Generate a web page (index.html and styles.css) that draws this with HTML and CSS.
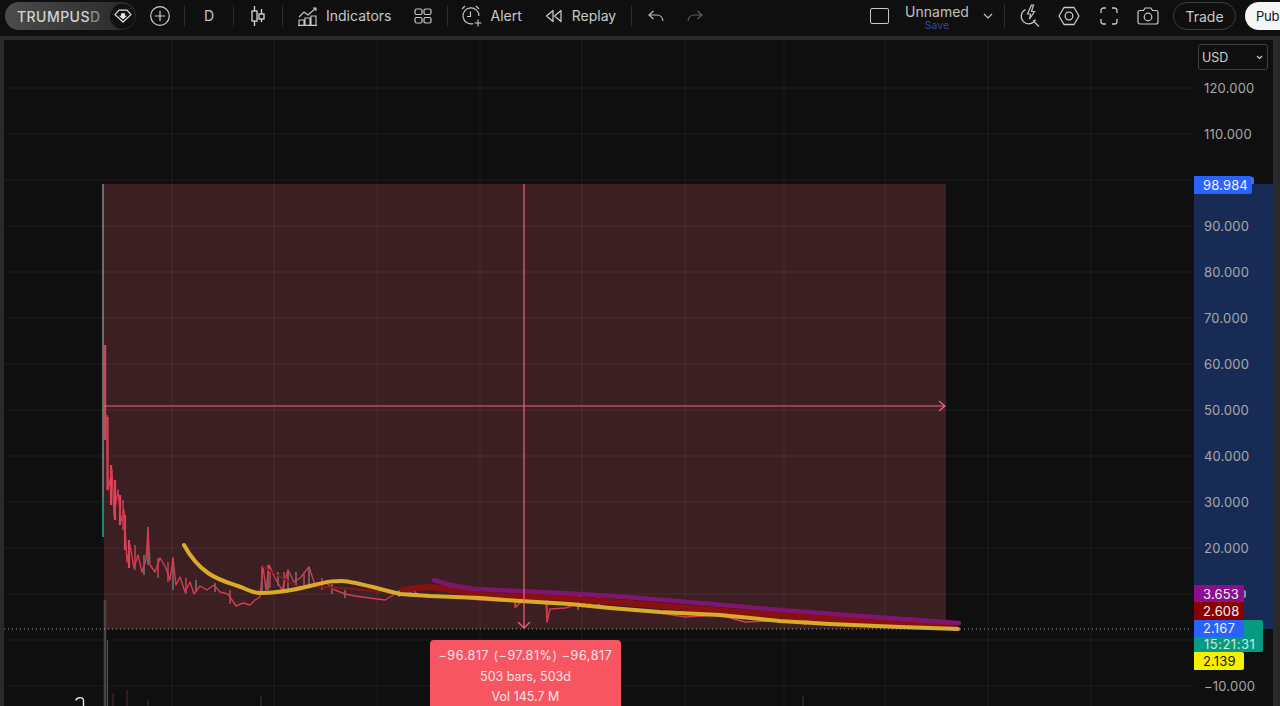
FILE: index.html
```html
<!DOCTYPE html>
<html lang="en">
<head>
<meta charset="utf-8">
<title>TRUMPUSD chart</title>
<link rel="stylesheet" href="styles.css">
</head>
<body>
<header class="toolbar">
  <div class="symbol">
    <span class="symbol-name">TRUMPUS<span class="fade">D</span></span>
    <span class="symbol-badge">
      <svg width="18" height="14" viewBox="0 0 18 14" fill="none" stroke="#e4e4e4" stroke-width="1.2" stroke-linejoin="round"><path d="M5 1.2h8l4 4.400L9 13 1 5.600z"/><path d="M7 4.200h4v2.600h2L9 10.400 5 6.800h2z" fill="#e4e4e4" stroke="none"/></svg>
    </span>
  </div>
  <button class="btn btn-plus">
    <svg width="20" height="20" viewBox="0 0 20 20" fill="none" stroke="#d0d0d0" stroke-width="1.2"><circle cx="10" cy="10" r="9.300"/><path d="M10 5v10M5 10h10"/></svg>
  </button>
  <i class="sep"></i>
  <button class="btn btn-cell">D</button>
  <i class="sep"></i>
  <button class="btn btn-cell">
    <svg width="16" height="20" viewBox="0 0 16 20" fill="none" stroke="#d8d8d8" stroke-width="1.300"><path d="M4.500 0v5M4.500 15v5M11.500 3v5M11.500 13v3"/><rect x="2" y="5" width="5" height="10"/><rect x="9" y="8" width="5" height="5"/></svg>
  </button>
  <i class="sep"></i>
  <button class="btn btn-indicators">
    <svg width="20" height="20" viewBox="0 0 20 20" fill="none" stroke="#c8c8c8" stroke-width="1.100"><path d="M1 11l5-5 4 3 8-7M15 2h3v3"/><path d="M1 19v-5h5v5M7 19v-7h5v7M13 19v-9h5v9M0 19.400h19"/></svg>
    <span>Indicators</span>
  </button>
  <button class="btn btn-layout">
    <svg width="18" height="16" viewBox="0 0 18 16" fill="none" stroke="#c8c8c8" stroke-width="1.200"><rect x="1" y="1" width="7" height="5.500" rx="1.500"/><rect x="10" y="1" width="7" height="5.500" rx="1.500"/><rect x="1" y="9.500" width="7" height="5.500" rx="1.500"/><rect x="10" y="9.500" width="7" height="5.500" rx="1.500"/></svg>
  </button>
  <i class="sep sep-layout"></i>
  <button class="btn btn-alert">
    <svg width="22" height="22" viewBox="0 0 22 22" fill="none" stroke="#c8c8c8" stroke-width="1.100"><path d="M12 18.600A8 8 0 1 1 18 11"/><path d="M9.500 6.500v5H6M1 4l3-3M15 1l3 3M17 14.500v7M13.500 18h7"/></svg>
    <span>Alert</span>
  </button>
  <button class="btn btn-replay">
    <svg width="18" height="14" viewBox="0 0 18 14" fill="none" stroke="#d0d0d0" stroke-width="1.200" stroke-linejoin="round"><path d="M8 1.500 1.500 7 8 12.500zM16 1.500 9.500 7l6.500 5.500z"/></svg>
    <span>Replay</span>
  </button>
  <i class="sep sep-replay"></i>
  <button class="btn btn-undo">
    <svg width="16" height="12" viewBox="0 0 16 12" fill="none" stroke="#b8b8b8" stroke-width="1.200"><path d="M5.500 1 1 5l4.500 4M1 5h8c4 0 5.500 2.500 6 6"/></svg>
  </button>
  <button class="btn btn-redo">
    <svg width="16" height="12" viewBox="0 0 16 12" fill="none" stroke="#5c5c5c" stroke-width="1.200"><path d="M10.500 1 15 5l-4.500 4M15 5H7c-4 0-5.500 2.500-6 6"/></svg>
  </button>

  <div class="toolbar-right">
    <span class="square"></span>
    <div class="layout-name">
      <span class="layout-title">Unnamed</span>
      <span class="layout-save">Save</span>
    </div>
    <button class="btn btn-chevron">
      <svg width="10" height="6" viewBox="0 0 10 6" fill="none" stroke="#c8c8c8" stroke-width="1.200"><path d="M1 1l4 4 4-4"/></svg>
    </button>
    <i class="sep sep-name"></i>
    <button class="btn btn-quick">
      <svg width="21" height="24" viewBox="0 0 21 24" fill="none" stroke="#c8c8c8" stroke-width="1.200"><path d="M6.500 5.500a7.500 7.500 0 1 0 10 10M14 16.500l6 6"/><path d="M12.500 1 8.500 10h3l-1 5 5-7.500h-3l2-6.500z"/></svg>
    </button>
    <button class="btn btn-hex">
      <svg width="22" height="20" viewBox="0 0 22 20" fill="none" stroke="#c8c8c8" stroke-width="1.300" stroke-linejoin="round"><path d="M6 1.500h10l5 8.500-5 8.500H6L1 10z"/><circle cx="11" cy="10" r="3.800"/></svg>
    </button>
    <button class="btn btn-full">
      <svg width="18" height="18" viewBox="0 0 18 18" fill="none" stroke="#c8c8c8" stroke-width="1.300"><path d="M1 6V3.500A2.500 2.500 0 0 1 3.500 1H6M12 1h2.500A2.500 2.500 0 0 1 17 3.500V6M17 12v2.500a2.500 2.500 0 0 1-2.500 2.500H12M6 17H3.500A2.500 2.500 0 0 1 1 14.500V12"/></svg>
    </button>
    <button class="btn btn-camera">
      <svg width="22" height="18" viewBox="0 0 22 18" fill="none" stroke="#c8c8c8" stroke-width="1.200"><path d="M3 3.500h3.500L8 1h6l1.500 2.500H19a2 2 0 0 1 2 2V15a2 2 0 0 1-2 2H3a2 2 0 0 1-2-2V5.500a2 2 0 0 1 2-2z"/><circle cx="11" cy="10" r="3.800"/></svg>
    </button>
    <button class="pill pill-trade">Trade</button>
    <button class="pill pill-publish">Pub</button>
  </div>
</header>

<main class="workspace">
  <div class="chart">
    <svg class="chart-svg" viewBox="4 40 1188 666" preserveAspectRatio="none">
      <rect class="measure" x="104" y="184" width="842" height="445"/>
      <path class="grid" d="M4 88H1192M4 134H1192M4 180H1192M4 226H1192M4 272H1192M4 318H1192M4 364H1192M4 410H1192M4 456H1192M4 502H1192M4 548H1192M4 594H1192M4 640H1192M4 686H1192M172 40V706M274 40V706M377 40V706M480 40V706M582 40V706M685 40V706M784 40V706M885 40V706M988 40V706M1091 40V706"/>
      <g class="soft">
        <path class="vol" d="M105 600V706"/>
        <path class="vol-thin-gray" d="M107.500 640V706"/>
        <path class="vol-thin" d="M113 693V706M127 690V706M148 700V706M261 696V706M803 696V706"/>
        <path class="wick-green" d="M103 184V500"/>
        <path class="wick-teal" d="M103 497V537"/>
        <path class="wick-red" d="M105 345V440"/>
        <path class="body-red" d="M107.500 417V490M111 465V505M115 480V520M120 495V525M125 515V550M129 540V568"/>
        <path class="ticks-green" d="M148 527V565M173 558V590M262 566V592M268 565V590M288 570V590M309 567V585M399 590V597M410 586V597M578 595V610M598 595V607M805 619V625M144 555V575M196 580V592M215 583V592M278 572V586M296 572V586M332 584V594M345 590V598"/>
        <path class="ticks-red" d="M515 597V608M547 600V622M123 500V530M135 545V570M158 558V578M168 562V582M186 578V594M230 590V604M270 566V588M284 572V590M304 574V588M322 578V590"/>
        <polyline class="price" points="107,415 108,490 112,470 114,515 118,490 121,522 124,510 127,562 130,545 134,568 138,555 142,572 146,560 148,530 150,565 155,572 160,558 165,566 170,580 173,558 176,585 180,577 185,592 190,582 194,594 200,586 207,590 214,585 220,592 228,594 236,606 243,603 250,605 255,600 260,597 263,566 266,590 269,565 275,578 282,590 288,570 294,582 300,578 309,567 315,585 325,582 335,590 345,594 355,596 370,598 385,600 395,594 410,588 420,596 450,596 480,600 500,601 515,600 516,607 522,601 546,602 547,622 550,609 565,608 578,604 580,596 586,606 598,598 600,606 640,610 660,613 685,617 720,615 745,622 770,621 800,622 805,620 830,624"/>
      </g>
      <g class="soft">
        <path class="ma-red-thin" d="M262 566 296 586 345 588 380 592"/>
        <path class="ma-red" d="M400 591 415 588 430 587 445 589 480 595 560 598 640 604 700 609 800 617 880 622 958 627"/>
        <path class="ma-purple" d="M434 580 450 585 475 589 520 591 580 594 640 598 700 603 780 610 860 616 959 623"/>
        <path class="ma-yellow" d="M184 545C190 556 198 566 208 573S226 582 238 586 250 593 262 593 290 591 310 586 332 581 342 581 372 587 400 594L430 596 480 598 520 601 570 604 610 608 660 612 720 615 780 621 830 624 900 627 958 629"/>
      </g>
      <path class="last" d="M4 629H1192"/>
      <path class="cross" d="M104 406H945M939 401l6 5-6 5M524 184V628M518 622l6 6 6-6"/>
    </svg>
    <svg class="logo-mark" width="12" height="12" viewBox="0 0 12 12" fill="none" stroke="#e8e8e8" stroke-width="1.400"><path d="M2 4.500C2 1.500 9.500 0 9.500 4.500V12"/></svg>
    <div class="measure-tip">
      <p class="tip-wide">−96.817 (−97.81%) −96,817</p>
      <p>503 bars, 503d</p>
      <p>Vol 145.7 M</p>
    </div>
  </div>
  <aside class="axis">
    <div class="currency"><span>USD</span><svg width="7" height="5" viewBox="0 0 7 5" fill="none" stroke="#d0d0d0" stroke-width="1.200"><path d="M1 1l2.500 2.500L6 1"/></svg></div>
    <div class="scale">
      <span>120.000</span><span>110.000</span><span></span><span>90.000</span><span>80.000</span><span>70.000</span><span>60.000</span><span>50.000</span><span>40.000</span><span>30.000</span><span>20.000</span><span></span><span></span><span>−10.000</span>
    </div>
    <div class="band"></div>
    <span class="tag tag-last">98.984</span>
    <span class="tag tag-purple">3.653</span>
    <span class="tag tag-red">2.608</span>
    <div class="tag-countdown"><span class="tag-price">2.167</span><span class="tag-time">15:21:31</span></div>
    <span class="tag tag-yellow">2.139</span>
  </aside>
</main>
</body>
</html>
```
FILE: styles.css
```css
* { box-sizing: border-box; }
html, body { margin: 0; height: 100%; overflow: hidden; background: #0f0f0f; }
body {
  display: flex;
  flex-direction: column;
  width: 1280px;
  height: 706px;
  font-family: Inter, "Liberation Sans", sans-serif;
  color: #c8c8c8;
}
p { margin: 0; }

.toolbar {
  flex: 0 0 36px;
  display: flex;
  align-items: center;
  padding: 0 0 4px 5px;
  background: #0f0f0f;
  overflow: hidden;
}
.btn {
  display: flex;
  align-items: center;
  justify-content: center;
  padding: 0;
  border: 0;
  background: none;
  color: #c8c8c8;
  font: inherit;
  font-size: 14px;
  line-height: 20px;
}
.sep { flex: 0 0 1px; height: 22px; background: #2b2b2b; }

.symbol {
  flex: 0 0 131px;
  height: 28px;
  display: flex;
  align-items: center;
  justify-content: space-between;
  padding: 0 1px 0 12px;
  border-radius: 14px;
  background: linear-gradient(90deg, #4b4b4b, #333 70%, #262626);
}
.symbol-name { font-size: 14px; font-weight: 500; color: #d2d2d2; letter-spacing: .45px; }
.fade { color: #8a8a8a; }
.symbol-badge {
  width: 25px;
  height: 25px;
  border-radius: 50%;
  background: #111;
  display: flex;
  align-items: center;
  justify-content: center;
}
.btn-plus { width: 48px; }
.btn-cell { width: 48px; }
.btn-indicators { margin-left: 15px; gap: 8px; }
.btn-layout { margin-left: 22px; }
.sep-layout { margin-left: 15px; }
.btn-alert { margin-left: 13px; gap: 8px; }
.btn-replay { margin-left: 23px; gap: 9px; }
.sep-replay { margin-left: 15px; }
.btn-undo { margin-left: 16px; }
.btn-redo { margin-left: 23px; }

.toolbar-right { margin-left: auto; display: flex; align-items: center; }
.square { width: 19px; height: 16px; border: 1.3px solid #c8c8c8; border-radius: 2px; }
.layout-name { width: 64px; margin-left: 16px; display: flex; flex-direction: column; align-items: center; gap: 1px; margin-top: 2px; }
.layout-title { font-size: 14px; line-height: 15px; color: #c0c0c0; }
.layout-save { font-size: 10.500px; line-height: 11px; color: #2a47a8; }
.btn-chevron { margin-left: 14px; }
.sep-name { margin-left: 11px; height: 24px; }
.btn-quick { margin-left: 14px; }
.btn-hex { margin-left: 18px; }
.btn-full { margin-left: 20px; }
.btn-camera { margin-left: 19px; }
.pill {
  height: 28px;
  border-radius: 14px;
  font: inherit;
  font-size: 14px;
  padding: 0;
}
.pill-trade { width: 63px; margin-left: 14px; border: 1px solid #3c3c3c; background: none; color: #c8c8c8; }
.pill-publish {
  width: 35px;
  margin-left: 9px;
  border: 0;
  border-radius: 14px 0 0 14px;
  background: #f6f6f6;
  color: #111;
  font-size: 13px;
  letter-spacing: -.2px;
  text-align: left;
  white-space: nowrap;
  padding-left: 11px;
}

.workspace {
  flex: 1;
  display: flex;
  position: relative;
  border-top: 4px solid #2a2a2a;
  border-left: 4px solid #2a2a2a;
  border-right: 7px solid #2a2a2a;
  min-height: 0;
}
.chart { flex: 1; position: relative; overflow: hidden; }
.chart-svg { display: block; width: 100%; height: 100%; }
.soft { filter: blur(.35px); }
.measure { fill: #3c1f22; }
.grid { stroke: rgba(255,255,255,.055); stroke-width: 1; fill: none; }
.vol { stroke: #4c4345; stroke-width: 2.500; fill: none; }
.vol-thin-gray { stroke: #555; stroke-width: 1; fill: none; }
.vol-thin { stroke: #4b3034; stroke-width: 1; fill: none; }
.wick-green { stroke: #84938c; stroke-width: 1.500; fill: none; }
.wick-teal { stroke: #168a72; stroke-width: 2; fill: none; }
.wick-red { stroke: #c24a5c; stroke-width: 2.500; fill: none; }
.body-red { stroke: #d8485c; stroke-width: 2.200; fill: none; }
.ticks-green { stroke: #7c9088; stroke-width: 1.200; fill: none; }
.ticks-red { stroke: #d84a5c; stroke-width: 1.300; fill: none; }
.price { stroke: #d83a50; stroke-width: 1.400; fill: none; stroke-linejoin: round; }
.ma-red { stroke: #8a1010; stroke-width: 6; fill: none; stroke-linejoin: round; }
.ma-red-thin { stroke: #80181d; stroke-width: 2; fill: none; }
.ma-purple { stroke: #7e1670; stroke-width: 4.500; fill: none; stroke-linecap: round; stroke-linejoin: round; }
.ma-yellow { stroke: #d8ac2a; stroke-width: 4; fill: none; stroke-linecap: round; stroke-linejoin: round; }
.last { stroke: #8aa79c; stroke-width: 1; stroke-dasharray: 1 3; fill: none; }
.cross { stroke: #f4637a; stroke-width: 1.200; fill: none; }
.logo-mark { position: absolute; left: 70px; top: 656px; }
.measure-tip {
  position: absolute;
  left: 426px;
  top: 600px;
  width: 191px;
  height: 80px;
  padding-top: 6px;
  border-radius: 4px;
  background: #f85563;
  color: #fbe6e8;
  font-size: 12.500px;
  line-height: 20.500px;
  text-align: center;
}
.tip-wide { letter-spacing: .6px; white-space: nowrap; }

.axis {
  flex: 0 0 81px;
  position: relative;
  background: #0f0f0f;
  overflow: hidden;
}
.currency {
  position: absolute;
  left: 6px;
  top: 4px;
  width: 70px;
  height: 26px;
  display: flex;
  align-items: center;
  justify-content: space-between;
  padding: 0 4px 0 3px;
  border: 1px solid #3f3f3f;
  border-radius: 3px;
  font-size: 12.500px;
  color: #d0d0d0;
  background: #0f0f0f;
  z-index: 3;
}
.scale {
  padding: 25px 0 0 12px;
  display: flex;
  flex-direction: column;
  align-items: flex-start;
}
.scale span {
  position: relative;
  z-index: 3;
  height: 46px;
  line-height: 46px;
  font-size: 13px;
  color: #a8a8a8;
  letter-spacing: .2px;
}
.band {
  position: absolute;
  left: 2px;
  right: 0;
  top: 144px;
  height: 445px;
  background: #172b55;
  z-index: 2;
}
.tag {
  position: absolute;
  left: 2px;
  width: 50px;
  height: 18px;
  padding-left: 9px;
  border-radius: 0 2px 2px 0;
  font-size: 13px;
  line-height: 18px;
  letter-spacing: .15px;
  color: #f3f3f3;
  z-index: 4;
}
.tag-last { top: 136px; width: 58px; background: #2962ff; }
.tag-last::after {
  content: "";
  position: absolute;
  right: -2px;
  top: 1px;
  width: 3px;
  height: 7px;
  border-radius: 0 2px 0 0;
  background: #3f70e8;
}
.tag-purple { top: 545px; background: #8b0e8e; }
.tag-purple::after {
  content: "";
  position: absolute;
  right: -2px;
  top: 5px;
  width: 2px;
  height: 8px;
  border-radius: 0 2px 2px 0;
  background: #8c93a8;
}
.tag-red { top: 562px; background: #8a0000; }
.tag-yellow { top: 612px; background: #f5ef00; color: #1a1a00; }
.tag-countdown {
  position: absolute;
  left: 2px;
  top: 580px;
  width: 69px;
  height: 32px;
  border-radius: 0 2px 2px 0;
  background: #089981;
  font-size: 13px;
  z-index: 4;
}
.tag-price {
  display: block;
  width: 50px;
  height: 17px;
  padding-left: 9px;
  line-height: 17px;
  letter-spacing: .15px;
  background: #2962ff;
  border-radius: 0 2px 2px 0;
  color: #f3f3f3;
}
.tag-time { display: block; padding-left: 10px; line-height: 15px; letter-spacing: .5px; color: #cfe8e2; }
```
